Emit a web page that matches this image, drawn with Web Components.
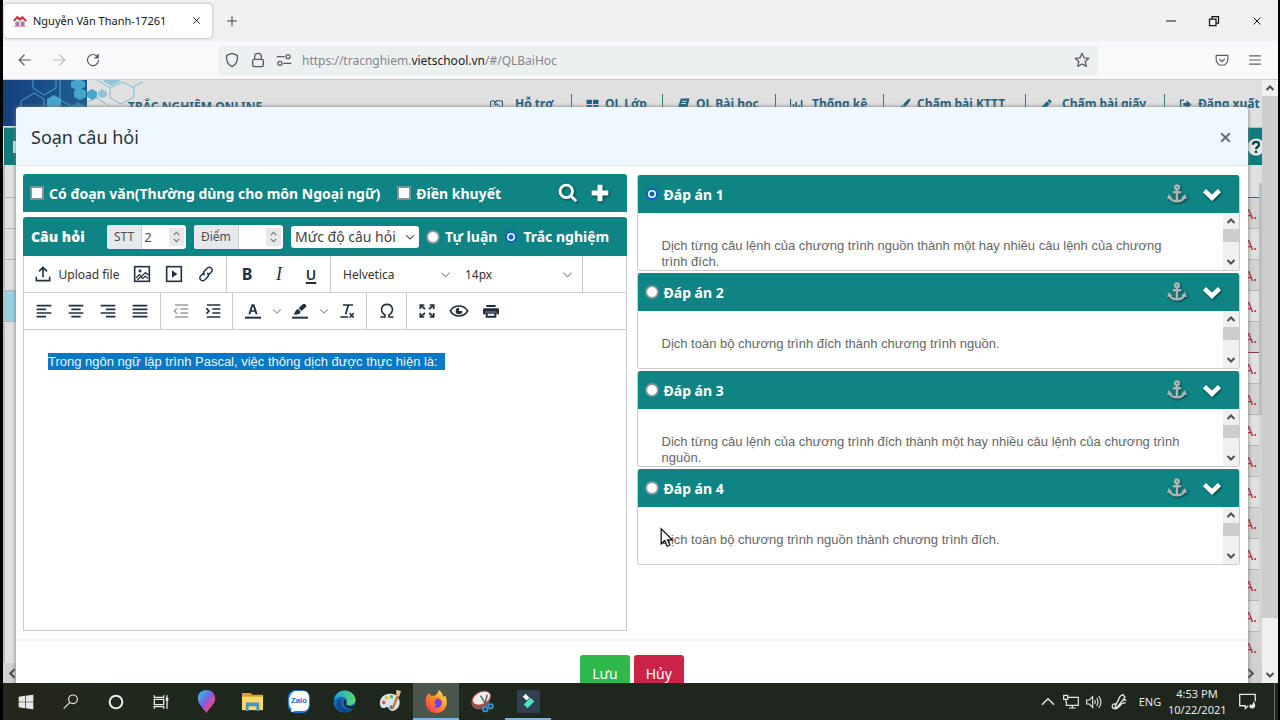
<!DOCTYPE html>
<html lang="vi">
<head>
<meta charset="utf-8">
<title>Nguyễn Văn Thanh-17261</title>
<style>
html,body{margin:0;height:100%;background:#000;overflow:hidden}
body{font-family:"Noto Sans","Open Sans",sans-serif;color:#333}
</style>
</head>
<body>
<desktop-screen></desktop-screen>
<script>
const define=(name,html,setup)=>{
  const t=document.createElement('template');
  t.innerHTML='<style>*{box-sizing:border-box}button,input,select{font:inherit;color:inherit;margin:0}button{background:none;border:0;padding:0;display:inline-flex;align-items:center;justify-content:center}a{color:inherit;text-decoration:none}</style>'+html;
  customElements.define(name,class extends HTMLElement{
    constructor(){super();this.attachShadow({mode:'open'}).append(t.content.cloneNode(true));}
    connectedCallback(){if(setup)setup(this,this.shadowRoot);}
  });
};

/* Line icons use a 24-unit box and take the text colour. */
const L=(d,w=2,x='')=>`<g fill="none" stroke="currentColor" stroke-width="${w}" ${x}>${d}</g>`;
const F=d=>`<g fill="currentColor">${d}</g>`;
const ICONS={
  close:L('<path d="M5 5L19 19M19 5L5 19"/>',2),
  closeBold:L('<path d="M4 4L20 20M20 4L4 20"/>',4),
  plusThin:L('<path d="M12 2V22M2 12H22"/>',2),
  back:L('<path d="M22 12H3M11 3L2 12L11 21"/>',2),
  forward:L('<path d="M2 12H21M13 3L22 12L13 21"/>',2),
  reload:L('<path d="M20 7A9.5 9.5 0 1 0 21.500 12"/>',2)+F('<path d="M22 1V9.500H13.500Z"/>'),
  shield:L('<path d="M12 2L20 5C21 13 18 19 12 22C6 19 3 13 4 5Z"/>',2,'stroke-linejoin="round"'),
  lock:L('<rect x="4" y="11" width="16" height="11" rx="2"/><path d="M7 11V7A5 5 0 0 1 17 7V11"/>',2),
  perms:L('<path d="M1 7H13M11 17H23"/><circle cx="18" cy="7" r="3"/><circle cx="6" cy="17" r="3"/>',2),
  star:L('<path d="M12 2L15 8.700L22.300 9.500L16.800 14.400L18.400 21.600L12 18L5.600 21.600L7.200 14.400L1.700 9.500L9 8.700Z"/>',2,'stroke-linejoin="round"'),
  pocket:L('<path d="M2 4H22V11A10 10 0 0 1 2 11Z"/><path d="M7 10L12 14.500L17 10"/>',2,'stroke-linejoin="round"'),
  menu:L('<path d="M2 5H22M2 12H22M2 19H22"/>',2),
  minus:L('<path d="M2 12H22"/>',2),
  restore:L('<path d="M3 8H16V21H3ZM8 8V3H21V16H16"/>',2.500),
  up:L('<path d="M5 16L12 9L19 16"/>',4),
  down:L('<path d="M5 8L12 15L19 8"/>',4),
  left:L('<path d="M16 4L8 12L16 20"/>',4),
  right:L('<path d="M8 4L16 12L8 20"/>',4),
  chev:L('<path d="M3 8L12 17L21 8"/>',2.500),
  chevup:L('<path d="M3 16L12 7L21 16"/>',2),
  spin:L('<path d="M6 8L12 2L18 8M6 16L12 22L18 16"/>',2.500),
  chevBold:L('<path d="M3 8L12 16.500L21 8"/>',5.500),
  search:L('<circle cx="10" cy="10" r="7.500"/><path d="M15.500 15.500L22 22"/>',3.500),
  plus:L('<path d="M12 2V22M2 12H22"/>',6),
  anchor:L('<circle cx="12" cy="4" r="2.300"/><path d="M12 6V21M7 10H17M2.500 14C4 23 20 23 21.500 14"/>',3)+F('<path d="M0 18L2 12L7 17ZM24 18L22 12L17 17Z"/>'),
  shake:L('<path d="M1 6L6 5L9 7L13 5L18 5L23 6V17H20M1 6V17H4L10 22L14 21L19 17L13 11L10 13L8 11L13 5"/>',2),
  grid:F('<path d="M1 3H11V11H1ZM13 3H23V11H13ZM1 13H11V21H1ZM13 13H23V21H13Z"/>'),
  book:F('<path fill-rule="evenodd" d="M7 1H23L19 18H5V20H19L20 18L18 23H4C1 22 1 19 2 17ZM9 5L8.500 7H17.500L18 5ZM8 9L7.500 11H16.500L17 9Z"/>'),
  chart:F('<path d="M0 2H2V20H24V22H0ZM5 11H8V18H5ZM10 7H13V18H10ZM15 13H18V18H15ZM20 4H23V18H20Z"/>'),
  brush:F('<path d="M23 1C21 0 13 7 9 13L13 17C18 12 24 4 23 1ZM8 14C4 14 5 20 1 21C6 24 12 22 12 18Z"/>'),
  pencil:F('<path d="M17 2L22 7L19 10L14 5ZM13 6L18 11L7 22L1 23L2 17Z"/>'),
  logout:L('<path d="M9 4H3V20H9"/>',2.500)+F('<path d="M8 9H14V4L23 12L14 20V15H8Z"/>'),
  upload:L('<path d="M12 17V3M6 8L12 2L18 8M2 16V22H22V16"/>',2.400),
  image:L('<rect x="1" y="1" width="22" height="22"/>',2.400)+L('<path d="M3 18L8 13L11 16L17 10L22 14M5 21L10 16L13 19L17 15L21 19"/>',1.800)+F('<circle cx="9" cy="7.500" r="2.200"/>'),
  video:L('<rect x="1" y="1" width="22" height="22"/>',2.400)+F('<path d="M9 6.500L17 12L9 17.500Z"/>'),
  link:L('<path d="M10 14C7 11 8 9 10 7L14 3C18 0 24 5 20 9L16 13M14 10C17 13 16 15 14 17L10 21C6 24 0 19 4 15L8 11"/>',2.200),
  alignL:L('<path d="M1 4H23M1 9.500H15M1 15H23M1 20.500H15"/>',2.600),
  alignC:L('<path d="M1 4H23M5 9.500H19M1 15H23M5 20.500H19"/>',2.600),
  alignR:L('<path d="M1 4H23M9 9.500H23M1 15H23M9 20.500H23"/>',2.600),
  alignJ:L('<path d="M1 4H23M1 9.500H23M1 15H23M1 20.500H23"/>',2.600),
  outdent:L('<path d="M3 3H23M11 9H23M11 15H23M3 21H23M6 8L2 12L6 16"/>',2.200),
  indent:L('<path d="M3 3H23M11 9H23M11 15H23M3 21H23M2 8L6 12L2 16"/>',2.600),
  color:F('<path d="M0 20.500H24V23.500H0Z"/><path fill-rule="evenodd" d="M10 2H14L19 17H16L14.700 13H9.300L8 17H5ZM10 10.800H14L12 4.500Z"/>'),
  marker:F('<path d="M0 20.500H24V23.500H0Z"/><path d="M16 2C19 0 23 3 21 6L14 12L10 8ZM9 9L13 13C12 17 7 18 2 17C5 15 4 11 9 9Z"/>'),
  clear:L('<path d="M6 3H21M14 3L10 17M2 21H14"/>',2.600)+L('<path d="M16 15L22 22M22 15L16 22"/>',2.200),
  omega:L('<path d="M2 21H9V18C0 12 4 2 12 2C20 2 24 12 15 18V21H22"/>',2.400),
  full:L('<path d="M2 9V3H8M3 4L9 9M16 3H22V9M21 4L15 9M2 15V21H8M3 20L9 15M16 21H22V15M21 20L15 15"/>',2.600),
  eye:L('<path d="M-1 12C5 2 19 2 25 12C19 22 5 22-1 12Z"/>',2.400)+F('<path d="M12 7A5 5 0 1 0 17 12H12Z"/>'),
  printer:F('<path d="M5 3H19V6H5ZM2 8H22C23 8 24 9 24 10V17H20V13H4V17H0V10C0 9 1 8 2 8Z"/><path fill-rule="evenodd" d="M4 14H20V22H4ZM7 16V19H17V16Z"/>'),
  win:F('<path d="M1 4L10.500 2.700V11.500H1ZM11.500 2.500L23 1V11.500H11.500ZM1 12.500H10.500V21.300L1 20ZM11.500 12.500H23V23L11.500 21.500Z"/>'),
  find:L('<circle cx="15" cy="8" r="6.500"/><path d="M10.500 12.500L1 22"/>',1.800),
  ring:L('<circle cx="12" cy="12" r="9.500"/>',3),
  tasks:L('<path d="M2 2V5H16V2M2 22V19H16V22M2 8H16V16H2ZM21 2V22"/>',2)+F('<path d="M19 6H23V10H19Z"/>'),
  monitor:L('<path d="M8 5H23V17H5V11M14 17V21M9 21H19M1 2H7V8H1ZM4 8V11"/>',1.800),
  sound:L('<path d="M1 9H5L10 4V20L5 15H1ZM13 9Q15 12 13 15M16 6Q20 12 16 18M19 3Q26 12 19 21"/>',1.700),
  pen:L('<path d="M14 3L18 1L21 5L9 20L6 21L7 17ZM7 15C1 14 0 21 5 22C11 23 12 18 17 14L22 13M17 9H23"/>',2),
  notice:L('<path d="M13 18L9 22V18H1V2H23V12"/>',1.800)+F('<path d="M20 12C24 15 24 22 19 22C14 22 14 18 16 16C17 18 20 17 20 12Z"/>'),
  help:'<circle cx="12" cy="12" r="11.500" fill="#e3e8e8"/>'+L('<path d="M8 9C8 4 16 4 16 9C16 12 12 12 12 15"/>',3).replace('currentColor','#123f42')+'<circle cx="12" cy="18.500" r="1.800" fill="#123f42"/>',
  house:'<path fill="#d22f3d" d="M0 11L7 3L12 7L16 3L24 11L21 13L16 8L12 12L7 8L3 13Z"/><path fill="#8a90bd" d="M4 13H11V21H4ZM13 13H20V21H13Z"/><path fill="#d65c68" d="M7 15H9V19H7ZM15 15H17V19H15ZM1 21H23V22H1Z"/>',
  maps:'<defs><linearGradient id="g" x1="0" y1="0" x2="1" y2="1"><stop offset="0" stop-color="#20d4ee"/><stop offset=".45" stop-color="#7a62e0"/><stop offset=".7" stop-color="#e0489c"/><stop offset="1" stop-color="#f59a3c"/></linearGradient></defs><path fill="url(#g)" d="M12 0C18 0 21 4 21 9C21 15 14 19 12 24C9 19 3 15 3 9C3 4 6 0 12 0Z"/>',
  folder:'<path fill="#d9a227" d="M1 3H10L12 5H23V9H1Z"/><path fill="#fbd968" d="M1 7H23V21H1Z"/><path fill="#4596c8" d="M5 13H19V22H16V17H8V22H5Z"/>',
  zalo:'<rect x="1" y="0" width="23" height="24" rx="8" fill="#1677ee"/><path fill="#fff" d="M8 1H17C21 1 23 4 23 8V14C23 19 21 22 16 22H9L4 23L5 20C1 17 0 5 8 1Z"/><text x="12.500" y="14" text-anchor="middle" font-family="Liberation Sans" font-weight="bold" font-size="8" fill="#1267d8">Zalo</text>',
  edge:'<defs><linearGradient id="e" x1="0" x2="1"><stop offset="0" stop-color="#1b9de2"/><stop offset="1" stop-color="#5ddb69"/></linearGradient></defs><circle cx="12" cy="12" r="11.500" fill="#1468b8"/><path fill="url(#e)" d="M1 11C2 3 8 0 13 .500C20 1 24 7 23.500 11C23 16 16 17 14 15C16 11 14 8 10 7C6 7 2 9 1 11Z"/><path fill="#0e4c91" d="M9 10C6 16 11 22 19 20C15 25 6 24 4 17C3 13 6 9 9 10Z"/><path fill="#1f261c" d="M12 10C15 11 12 14 14.500 16C17 18 21 17 23 15L22 19C16 21 9 17 12 10Z"/>',
  paint:'<path fill="#d3e3ea" d="M13 4C5 3 0 9 1 15C2 20 6 19 8 18C10 17 10 22 14 22C20 21 23 15 21 10C20 7 17 4 13 4Z"/><circle cx="5" cy="13" r="1.800" fill="#e34c3b"/><circle cx="8" cy="8" r="1.800" fill="#efba2e"/><circle cx="13" cy="7" r="1.800" fill="#58b850"/><circle cx="13" cy="18" r="2" fill="#367ec7"/><path stroke="#c87a3b" stroke-width="2.500" d="M20 5L14 20"/><path fill="#f0bd86" d="M18 0L23 1L21 7L18 6Z"/>',
  firefox:'<defs><linearGradient id="f" x1="1" y1="0" x2="0" y2="1"><stop offset="0" stop-color="#fff44f"/><stop offset=".45" stop-color="#ff9328"/><stop offset="1" stop-color="#f0265f"/></linearGradient></defs><path fill="url(#f)" d="M2 6L4 3L6 6L10 6C12 5 14 3 14 0C18 2 19 6 19 7L21 6C25 13 22 24 12 24C3 24-2 15 2 6Z"/><circle cx="12.500" cy="13.500" r="5" fill="#7042d5"/><path fill="#ff7a28" d="M5 9C8 8 12 8 13 10C9 10 9 14 12 16C8 19 4 14 5 9Z"/>',
  snip:'<ellipse cx="10" cy="12" rx="10" ry="8" transform="rotate(-25 10 12)" fill="#8a5550"/><ellipse cx="11" cy="8.500" rx="10" ry="6.500" transform="rotate(-25 11 8.500)" fill="#f2eded" stroke="#c74d4d"/><path fill="none" stroke="#58656b" stroke-width="1.500" d="M10 6L17 17M17 5L14 16"/><g fill="none" stroke="#3295d2" stroke-width="2"><circle cx="15" cy="20" r="2.300"/><circle cx="20.500" cy="17" r="2.300"/></g>',
  filmora:'<rect width="24" height="24" rx="1" fill="#2f4150"/><path fill="#fff" d="M9 4L13 8L10 11L6 7Z"/><path fill="#50e3c2" d="M14 8L18 12L11 19L7 15Z"/>',
  cursor:'<path fill="#fff" stroke="#111" stroke-width="1.600" d="M4 1V20L8.500 16L11.500 23L15 21.500L12 15H18Z"/>'
};
class UiIcon extends HTMLElement{
  static observedAttributes=['name'];
  constructor(){super();this.attachShadow({mode:'open'});}
  attributeChangedCallback(){
    this.shadowRoot.innerHTML='<style>:host{display:inline-block;width:16px;height:16px;flex:none}svg{display:block;width:100%;height:100%;overflow:visible}</style><svg viewBox="0 0 24 24" aria-hidden="true">'+(ICONS[this.getAttribute('name')]||'')+'</svg>';
  }
}
customElements.define('ui-icon',UiIcon);

define('tab-strip',`<style>
:host{display:flex;align-items:center;height:41px;background:#f0f0f0;font-size:11px;color:#15141a;padding-left:1px;flex:none}
.tab{display:flex;align-items:center;width:208px;height:34px;background:#fff;border-radius:4px;box-shadow:0 0 3px #999;padding:0 10px 0 9px}
.tab span{flex:1;padding-left:6px;white-space:nowrap}
.tab ui-icon{width:14px;height:14px}.tab .x{width:11px;height:11px}
.new{margin-left:14px;color:#444}.new ui-icon{width:12px;height:12px}
.sys{margin-left:auto;display:flex}.sys button{width:43px;height:34px}.sys ui-icon{width:12px;height:12px}
</style><div class="tab"><ui-icon name="house"></ui-icon><span>Nguyễn Văn Thanh-17261</span><button aria-label="Đóng thẻ"><ui-icon class="x" name="close"></ui-icon></button></div>
<button class="new" aria-label="Thẻ mới"><ui-icon name="plusThin"></ui-icon></button>
<div class="sys"><button aria-label="Thu nhỏ"><ui-icon name="minus"></ui-icon></button><button aria-label="Khôi phục"><ui-icon name="restore"></ui-icon></button><button aria-label="Đóng"><ui-icon name="close"></ui-icon></button></div>`);

define('nav-bar',`<style>
:host{display:grid;grid-template-columns:215px minmax(0,880px) 1fr;align-items:center;height:39px;background:#f9f9fb;border-bottom:1px solid #c9c9cc;color:#5b5b66;font-size:12px;flex:none}
.b{display:flex;gap:20px;padding-left:15px}.b ui-icon{width:14px;height:14px}.off{color:#bbb}
.url{height:29px;background:#edf0f1;border-radius:3px;display:flex;align-items:center;gap:10px;padding:0 8px 0 6px}
.url a{flex:1;color:#85858c;white-space:nowrap}.url b{font-weight:normal;color:#222}
.e{display:flex;justify-content:flex-end;gap:19px;padding-right:16px}.e ui-icon{width:14px;height:14px}
</style><div class="b"><button aria-label="Lùi"><ui-icon name="back"></ui-icon></button><button class="off" aria-label="Tiến"><ui-icon name="forward"></ui-icon></button><button aria-label="Tải lại"><ui-icon name="reload"></ui-icon></button></div>
<div class="url"><ui-icon name="shield"></ui-icon><ui-icon name="lock"></ui-icon><ui-icon name="perms"></ui-icon><a href="#/QLBaiHoc">https://tracnghiem.<b>vietschool.vn</b>/#/QLBaiHoc</a><button aria-label="Đánh dấu trang"><ui-icon name="star"></ui-icon></button></div>
<div class="e"><button aria-label="Pocket"><ui-icon name="pocket"></ui-icon></button><button aria-label="Trình đơn"><ui-icon name="menu"></ui-icon></button></div>`);

define('scroll-rail',`<style>
:host{display:flex;flex-direction:column;width:16px;background:#f0f0f0;color:#505050}
ui-icon{width:12px;height:12px}button{height:16px;width:100%;flex:none}
.t{flex:var(--thumb,1);background:#cdcdcd}.r{flex:var(--rest,1)}
</style><button aria-label="Cuộn lên"><ui-icon name="up"></ui-icon></button><div class="t"></div><div class="r"></div><button aria-label="Cuộn xuống"><ui-icon name="down"></ui-icon></button>`);

define('site-header',`<style>
:host{display:flex;height:48px;background:#e0e0e0;color:#1f6282;border-bottom:1px solid #aebcbc;flex:none;overflow:hidden}
svg{width:160px;height:46px;flex:none}
h1{margin:0 0 0 -35px;padding-top:16px;font-size:12px;line-height:22px;white-space:nowrap;flex:1}
nav{display:grid;grid-template-columns:98px 91px 113px 108px 142px 139px 97px;padding-top:14px;font-size:12px;font-weight:bold;line-height:20px}
a{display:flex;gap:6px;align-items:flex-start;border-right:1px solid #2c8080;padding-left:14px;white-space:nowrap}
a:last-child{border:0}a ui-icon{width:13px;height:13px;margin-top:4px}.w{gap:10px}.w ui-icon{width:17px}.g{gap:9px}
</style><svg viewBox="0 0 160 46"><defs><linearGradient id="b"><stop offset="0" stop-color="#153f80"/><stop offset="1" stop-color="#1d6090"/></linearGradient></defs><rect width="84" height="46" fill="url(#b)"/>
<g fill="#47a4cc"><path d="M75-2L82 2V7L75 11L68 7V2ZM77 8L83 11V17L77 20L71 17V11ZM51 15L58 19V26L51 30L44 26V19ZM89 9L94 12V17L89 20L84 17V12Z"/><path opacity=".5" d="M108-3L118 1L108 6L100 1ZM99 9L104 12V16L99 18L95 16V12ZM75 22L82 26V32L75 36L68 32V26Z"/></g>
<g fill="none" stroke="#62b5d6" stroke-width="1" opacity=".8"><path d="M30 0V8L41 15L53 8V0M18 30V21L31 13L41 19V31M57 0V20L68 26M94 0L107 8V18L118 24L131 17V6L140 2M84 22L94 18L106 26M107 8L120 2L131 8"/></g></svg>
<h1>TRẮC NGHIỆM ONLINE</h1>
<nav><a class="w" href="#"><ui-icon name="shake"></ui-icon>Hỗ trợ</a><a href="#"><ui-icon name="grid"></ui-icon>QL Lớp</a><a href="#"><ui-icon name="book"></ui-icon>QL Bài học</a><a class="g" href="#"><ui-icon name="chart"></ui-icon>Thống kê</a><a href="#"><ui-icon name="brush"></ui-icon>Chấm bài KTTT</a><a class="g" href="#"><ui-icon name="pencil"></ui-icon>Chấm bài giấy</a><a href="#"><ui-icon name="logout"></ui-icon>Đăng xuất</a></nav>`);

define('lesson-page',`<style>
:host{display:flex;flex-direction:column;flex:1;min-width:0;background:#e0e0e0}
.bar{height:37px;background:#107a7c;display:flex;align-items:center;justify-content:space-between;margin-left:1px;padding-left:9px;flex:none;overflow:hidden}
.bar i{width:12px;height:12px;background:#dfe8e8}.bar button{margin-right:-3px}.bar ui-icon{width:18px;height:18px}
.m{display:flex;flex:1;min-height:0;overflow:hidden;border-left:2px solid #bbb}
table{border-collapse:collapse;font-size:14px}.l{width:300px;margin-top:32px;align-self:flex-start}.r{flex:1;margin-top:32px;align-self:flex-start}
td{height:31px;padding:0 2px 0 0;border-top:1px solid #b5b5b5;text-align:right;color:#c01432}
.r tr:nth-child(odd){background:#d2d2d2}.r tr:first-child td{border-top:1px solid #107a7c}.r tr:nth-child(6) td{border-top-color:#88344a}
.l .on{background:#96d2e4}
.s{width:3px;background:linear-gradient(#e0e0e0 18px,#bdbdbd 18px 250px,#d5d5d5 250px)}
.h{height:20px;display:flex;align-items:center;justify-content:space-between;background:#d0d0d0;padding:0 5px 0 3px;color:#505050;flex:none}.h ui-icon{width:13px;height:13px}
</style><site-header></site-header>
<div class="bar"><i></i><button aria-label="Trợ giúp"><ui-icon name="help"></ui-icon></button></div>
<div class="m"><table class="l"><tr><td></td></tr><tr><td></td></tr><tr><td></td></tr><tr class="on"><td></td></tr><tr><td></td></tr></table><table class="r"></table><div class="s"></div></div>
<div class="h"><ui-icon name="left"></ui-icon><ui-icon name="right"></ui-icon></div>`,
(h,r)=>{r.querySelector('.r').innerHTML='<tr><td>A.</td></tr>'.repeat(15);});

/* Radio and tick boxes share one look. */
const CHECKS=`input[type=radio],input[type=checkbox]{appearance:none;flex:none;width:12px;height:12px;background:#fff;border:1px solid #8f8f9d;box-shadow:0 0 0 1px #71939c}
input[type=radio]{border-radius:50%}input[type=radio]:checked{border:2px solid #0a5fc4;background:radial-gradient(#0a5fc4 2px,#fff 3px);box-shadow:none}`;

define('tool-button',`<style>:host{display:inline-flex;width:32px;height:36px;color:#222f3e}button{width:100%;height:100%}ui-icon{width:16px;height:16px}
:host([label]){width:98px}button span{font-size:12px;padding-left:8px;white-space:nowrap;color:#333}
:host([small]){width:15px;color:#8a8f96}:host([small]) ui-icon{width:10px;height:10px}:host([off]){color:#9a9fa5}</style><button><ui-icon></ui-icon></button>`,
(h,r)=>{const b=r.querySelector('button');b.querySelector('ui-icon').setAttribute('name',h.getAttribute('icon'));
 b.setAttribute('aria-label',h.getAttribute('label')||h.getAttribute('icon'));
 if(h.hasAttribute('label')&&!b.querySelector('span')){const s=document.createElement('span');s.textContent=h.getAttribute('label');b.append(s);}});
define('letter-button',`<style>:host{display:inline-flex;width:32px;height:36px;color:#222f3e;font-size:16px}button{width:100%;height:100%}
:host([bold]){font-weight:bold}:host([italic]){font-family:"Liberation Serif",serif;font-style:italic;font-size:18px}:host([underline]){font-weight:600;font-size:14px}:host([underline]) button{text-decoration:underline;text-decoration-thickness:2px;text-underline-offset:2px}</style><button><slot></slot></button>`);

define('editor-toolbar',`<style>
:host{display:block;border:1px solid #ccc;border-width:0 1px}
.row{display:flex;height:37px;border-bottom:1px solid #ccc}
.g{display:flex;padding:0 3px 0 4px;border-right:1px solid #ccc}.g:first-child{padding-right:4px}.g.last{border:0}
.s{position:relative;display:flex;align-items:center;width:122px;font-size:12px}
select{appearance:none;width:100%;height:36px;border:0;background:none;padding:0 8px;color:#333}
.s ui-icon{position:absolute;right:6px;width:11px;height:11px;color:#8a8f96;pointer-events:none}
</style>
<div class="row"><div class="g"><tool-button icon="upload" label="Upload file"></tool-button><tool-button icon="image"></tool-button><tool-button icon="video"></tool-button><tool-button icon="link"></tool-button></div>
<div class="g"><letter-button bold>B</letter-button><letter-button italic>I</letter-button><letter-button underline>U</letter-button></div>
<div class="g"><div class="s"><select aria-label="Phông chữ"><option>Helvetica</option></select><ui-icon name="chev"></ui-icon></div><div class="s"><select aria-label="Cỡ chữ"><option>14px</option></select><ui-icon name="chev"></ui-icon></div></div></div>
<div class="row"><div class="g"><tool-button icon="alignL"></tool-button><tool-button icon="alignC"></tool-button><tool-button icon="alignR"></tool-button><tool-button icon="alignJ"></tool-button></div>
<div class="g"><tool-button icon="outdent" off></tool-button><tool-button icon="indent"></tool-button></div>
<div class="g"><tool-button icon="color"></tool-button><tool-button icon="chev" small></tool-button><tool-button icon="marker"></tool-button><tool-button icon="chev" small></tool-button><tool-button icon="clear"></tool-button></div>
<div class="g"><tool-button icon="omega"></tool-button></div>
<div class="g last"><tool-button icon="full"></tool-button><tool-button icon="eye"></tool-button><tool-button icon="printer"></tool-button></div></div>`);

define('question-editor',`<style>${CHECKS}
:host{display:flex;flex-direction:column;gap:5px;font-size:14px}
.bar{display:flex;align-items:center;background:#0f8484;color:#fff;font-weight:bold;height:38px;border-radius:3px 3px 0 0;padding:0 8px;gap:18px;white-space:nowrap}
.bar ui-icon{width:20px;height:20px;filter:drop-shadow(1px 1px 1px #063b3b)}.bar .first{margin-left:auto}.bar button+button{margin-left:-6px;margin-right:9px}
label{display:flex;align-items:center}.bar label.c{gap:6px}
.bar.q{height:39px;gap:8px}.q>b{width:68px;flex:none}
.grp{display:flex;height:24px;border-radius:3px;overflow:hidden;background:#fff;color:#495057;font-weight:normal;font-size:12px;width:79px;position:relative;flex:none}
.grp.wide{width:89px}.grp label{background:#e4eaec;border-right:1px solid #ccd;padding:0 7px;flex:none}
.grp input{width:0;flex:1;border:0;padding:0 2px;font-size:13px;appearance:textfield;outline:0}
.grp ui-icon{width:15px;height:18px;margin:3px 2px;background:#e8e8e8;color:#777;filter:none;padding:2px}
input::-webkit-inner-spin-button{appearance:none}
.sel{position:relative;display:flex;align-items:center;color:#444;font-weight:normal;width:128px;flex:none}
select{appearance:none;width:100%;height:22px;background:#fff;border:0;border-radius:3px;padding:0 4px;font-size:14px}
.bar .sel ui-icon{position:absolute;right:4px;width:10px;height:10px;filter:none}
.ed{border:1px solid #ccc;border-top:0;min-height:301px;padding:24px;font:13px/16px "Liberation Sans",sans-serif;outline:0;color:#fff}
mark{background:#0a78c4;color:#e9f6ff;padding:1px 7px 1px 0}
</style>
<div class="bar"><label class="c"><input type="checkbox">Có đoạn văn(Thường dùng cho môn Ngoại ngữ)</label><label class="c"><input type="checkbox">Điền khuyết</label><button class="first" aria-label="Tìm"><ui-icon name="search"></ui-icon></button><button aria-label="Thêm"><ui-icon name="plus"></ui-icon></button></div>
<div><div class="bar q"><b>Câu hỏi</b><div class="grp"><label for="stt">STT</label><input id="stt" type="number" value="2"><ui-icon name="spin"></ui-icon></div><div class="grp wide"><label for="diem">Điểm</label><input id="diem" type="number"><ui-icon name="spin"></ui-icon></div>
<div class="sel"><select aria-label="Mức độ câu hỏi"><option>Mức độ câu hỏi</option></select><ui-icon name="chev"></ui-icon></div>
<label class="c"><input type="radio" name="kind">Tự luận</label><label class="c"><input type="radio" name="kind" checked>Trắc nghiệm</label></div>
<editor-toolbar></editor-toolbar>
<div class="ed" contenteditable="true" spellcheck="false" role="textbox" aria-label="Nội dung câu hỏi"><mark>Trong ngôn ngữ lập trình Pascal, việc thông dịch được thực hiện là:</mark></div></div>`);

define('answer-card',`<style>${CHECKS}
:host{display:block;border:1px solid #ccc;border-top:0;border-radius:3px;overflow:hidden;margin-bottom:2px}
.top{display:flex;align-items:center;height:38px;background:#0f8484;color:#fff;font-size:14px;font-weight:bold;margin:0 -1px;padding:0 18px 0 9px}
label{display:flex;align-items:center;gap:6px;flex:1}
.top ui-icon{width:20px;height:20px;filter:drop-shadow(1px 1px 1px #063b3b)}.a{color:#aab4b4;margin-right:15px}
.body{display:flex;height:57px;overflow:hidden}.t{flex:1;padding:25px 34px 0 24px;font:13px/16px "Liberation Sans",sans-serif;color:#666;outline:0}
scroll-rail{--thumb:1;--rest:1;}
</style><div class="top"><label><input type="radio" name="answer"><span></span></label><button class="a" aria-label="Ghim"><ui-icon name="anchor"></ui-icon></button><button aria-label="Thu gọn"><ui-icon name="chevBold"></ui-icon></button></div>
<div class="body"><div class="t"><slot></slot></div><scroll-rail></scroll-rail></div>`,
(h,r)=>{r.querySelector('span').textContent=h.getAttribute('label');r.querySelector('input').checked=h.hasAttribute('checked');});

define('question-dialog',`<style>
:host{display:block;background:#fff;border-radius:4px 4px 0 0;box-shadow:0 0 4px #777;overflow:hidden}
header{display:flex;align-items:center;justify-content:space-between;height:59px;background:#f0f8ff;border-bottom:1px solid #dfe7ec;padding:2px 16px 0 15px}
h2{margin:0;font-size:18px;font-weight:normal;color:#2c3238}header button{color:#6c7176}header ui-icon{width:13px;height:13px}
.cols{display:grid;grid-template-columns:minmax(0,1fr) minmax(0,1fr);gap:10px;padding:8px 8px 8px 7px}
.ans{padding-top:1px}
footer{border-top:2px solid #f2f2f2;padding-top:14px;display:flex;justify-content:center;gap:4px;min-height:120px;align-items:flex-start}
footer button{height:36px;border-radius:3px;color:#fff;font-size:14px;padding:0 12px;background:#2fb84c}footer .no{background:#cc2448}
</style><header><h2>Soạn câu hỏi</h2><button aria-label="Đóng"><ui-icon name="closeBold"></ui-icon></button></header>
<div class="cols"><question-editor></question-editor><div class="ans">
<answer-card label="Đáp án 1" checked>Dịch từng câu lệnh của chương trình nguồn thành một hay nhiều câu lệnh của chương trình đích.</answer-card>
<answer-card label="Đáp án 2">Dịch toàn bộ chương trình đích thành chương trình nguồn.</answer-card>
<answer-card label="Đáp án 3">Dich từng câu lệnh của chương trình đích thành một hay nhiều câu lệnh của chương trình nguồn.</answer-card>
<answer-card label="Đáp án 4">Dịch toàn bộ chương trình nguồn thành chương trình đích.</answer-card></div></div>
<footer><button>Lưu</button><button class="no">Hủy</button></footer>`);

define('task-bar',`<style>
:host{display:flex;height:37px;background:linear-gradient(90deg,#25261c,#1f281d 12%,#1e261d);color:#e8e8e8;font-size:11px;flex:none}
button{width:45px;height:37px}button.p{width:46px}.p ui-icon{width:23px;height:23px}
.on{background:#4a564d;box-shadow:inset 0 -2px #76b9e0}.run{box-shadow:inset 0 -2px #76b9e0}
.tray{margin-left:auto;display:flex;align-items:center}.tray button{width:23px}.tray .n{width:27px}.tray .lang{width:36px}
.clock{width:58px;text-align:center;line-height:16px;white-space:nowrap}.tray .note{width:42px;margin-right:6px}.note ui-icon{width:17px;height:17px}.edge{width:4px;height:37px;border-left:1px solid #666}
</style><button aria-label="Bắt đầu"><ui-icon name="win"></ui-icon></button><button aria-label="Tìm kiếm"><ui-icon name="find"></ui-icon></button><button aria-label="Cortana"><ui-icon name="ring"></ui-icon></button><button aria-label="Tác vụ"><ui-icon name="tasks"></ui-icon></button>
<button class="p" aria-label="Paint 3D"><ui-icon name="maps"></ui-icon></button><button class="p" aria-label="Thư mục"><ui-icon name="folder"></ui-icon></button><button class="p" aria-label="Zalo"><ui-icon name="zalo"></ui-icon></button><button class="p" aria-label="Edge"><ui-icon name="edge"></ui-icon></button><button class="p" aria-label="Paint"><ui-icon name="paint"></ui-icon></button><button class="p on" aria-label="Firefox"><ui-icon name="firefox"></ui-icon></button><button class="p" aria-label="Cắt màn hình"><ui-icon name="snip"></ui-icon></button><button class="p run" aria-label="Filmora"><ui-icon name="filmora"></ui-icon></button>
<div class="tray"><button aria-label="Biểu tượng ẩn"><ui-icon name="chevup"></ui-icon></button><button aria-label="Mạng"><ui-icon name="monitor"></ui-icon></button><button aria-label="Âm lượng"><ui-icon name="sound"></ui-icon></button><button class="n" aria-label="Bút"><ui-icon name="pen"></ui-icon></button><button class="lang">ENG</button><div class="clock">4:53 PM<br>10/22/2021</div><button class="note" aria-label="Thông báo"><ui-icon name="notice"></ui-icon></button><div class="edge"></div></div>`);

define('desktop-screen',`<style>
:host{display:flex;flex-direction:column;height:100vh;margin:0 2px 0 3px}
.view{position:relative;flex:1;min-height:0;display:flex;overflow:hidden;background:#e0e0e0}
.view>scroll-rail{--thumb:523;--rest:49}
question-dialog{position:absolute;left:13px;right:30px;top:27px}
.ptr{position:absolute;left:655px;top:448px;width:19px;height:19px}
</style><tab-strip></tab-strip><nav-bar></nav-bar><div class="view"><lesson-page></lesson-page><scroll-rail></scroll-rail><question-dialog></question-dialog><ui-icon class="ptr" name="cursor"></ui-icon></div><task-bar></task-bar>`);
</script>
</body>
</html>
